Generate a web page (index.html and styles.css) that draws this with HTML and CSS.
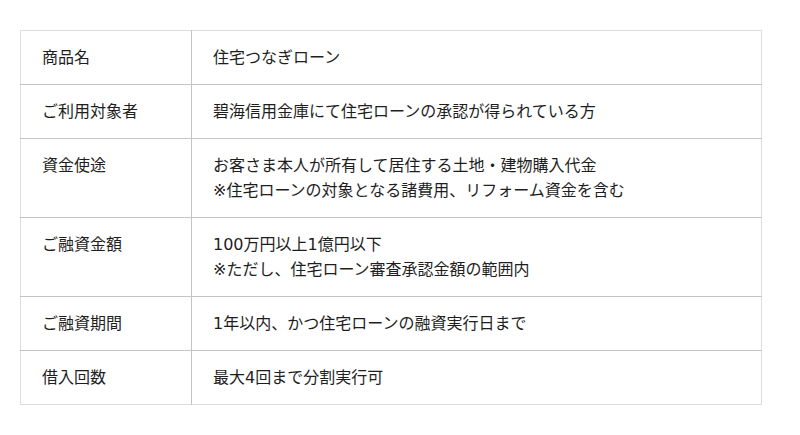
FILE: index.html
```html
<!DOCTYPE html>
<html lang="ja">
<head>
<meta charset="utf-8">
<link rel="stylesheet" href="styles.css">
</head>
<body>
<div class="wrap">
<table class="spec">
<tr><th>商品名</th><td>住宅つなぎローン</td></tr>
<tr><th>ご利用対象者</th><td>碧海信用金庫にて住宅ローンの承認が得られている方</td></tr>
<tr><th>資金使途</th><td>お客さま本人が所有して居住する土地・建物購入代金<br>※住宅ローンの対象となる諸費用、リフォーム資金を含む</td></tr>
<tr><th>ご融資金額</th><td>100万円以上1億円以下<br>※ただし、住宅ローン審査承認金額の範囲内</td></tr>
<tr><th>ご融資期間</th><td>1年以内、かつ住宅ローンの融資実行日まで</td></tr>
<tr><th>借入回数</th><td>最大4回まで分割実行可</td></tr>
</table>
</div>
</body>
</html>
```
FILE: styles.css
```css
html, body {
  margin: 0;
  background: #fff;
}
.wrap {
  padding: 30px 38px 0 20px;
}
.spec {
  width: 742px;
  border-collapse: collapse;
  font-family: "DejaVu Sans", "Noto Sans CJK JP", sans-serif;
  font-size: 16px;
  line-height: 25px;
  color: #1e1e1e;
  border: 1px solid #ddd;
}
.spec th, .spec td {
  text-align: left;
  vertical-align: top;
  font-weight: normal;
  padding: 14px 21px 14px 21px;
  border-top: 1px solid #c4c4c4;
}
.spec tr:first-child th, .spec tr:first-child td {
  border-top: 1px solid #ddd;
}
.spec th {
  width: 128px;
  border-right: 1px solid #c4c4c4;
}
```
